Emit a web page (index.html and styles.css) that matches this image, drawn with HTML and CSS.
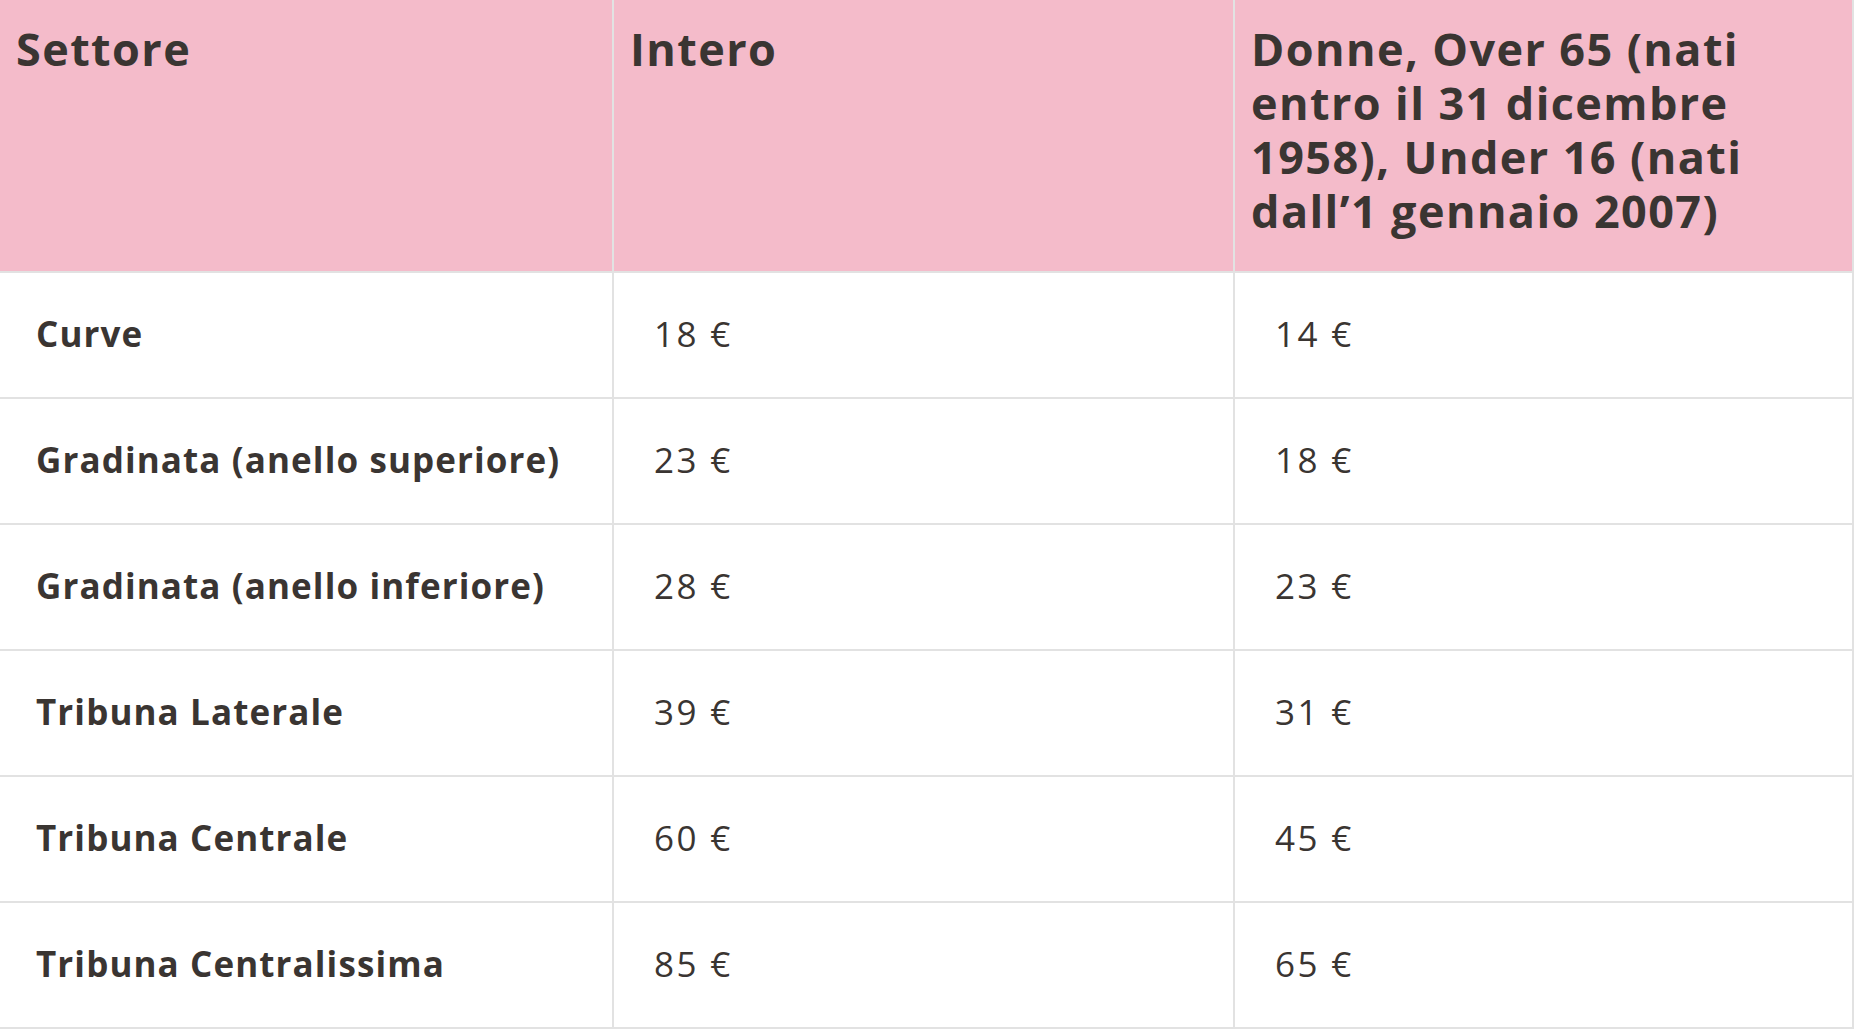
FILE: index.html
```html
<!DOCTYPE html>
<html lang="it">
<head>
<meta charset="utf-8">
<title>Prezzi biglietti</title>
<link rel="stylesheet" href="styles.css">
</head>
<body>
<table class="prices">
  <colgroup>
    <col class="c1">
    <col class="c2">
    <col class="c3">
  </colgroup>
  <thead>
    <tr>
      <th>Settore</th>
      <th>Intero</th>
      <th>Donne, Over 65 (nati entro il 31 dicembre 1958), Under 16 (nati dall’1 gennaio 2007)</th>
    </tr>
  </thead>
  <tbody>
    <tr><td class="name">Curve</td><td class="val">18 €</td><td class="val">14 €</td></tr>
    <tr><td class="name">Gradinata (anello superiore)</td><td class="val">23 €</td><td class="val">18 €</td></tr>
    <tr><td class="name">Gradinata (anello inferiore)</td><td class="val">28 €</td><td class="val">23 €</td></tr>
    <tr><td class="name">Tribuna Laterale</td><td class="val">39 €</td><td class="val">31 €</td></tr>
    <tr><td class="name">Tribuna Centrale</td><td class="val">60 €</td><td class="val">45 €</td></tr>
    <tr><td class="name">Tribuna Centralissima</td><td class="val">85 €</td><td class="val">65 €</td></tr>
  </tbody>
</table>
</body>
</html>
```
FILE: styles.css
```css
html, body {
  margin: 0;
  padding: 0;
  background: #ffffff;
}

body {
  font-family: "Open Sans", "Liberation Sans", sans-serif;
  color: #3a3532;
}

.prices {
  border-collapse: separate;
  border-spacing: 0;
  table-layout: fixed;
  width: 1854px;
}

.c1 { width: 614px; }
.c2 { width: 621px; }
.c3 { width: 619px; }

.prices th,
.prices td {
  border-right: 2px solid #e2e2e2;
  border-bottom: 2px solid #e2e2e2;
  text-align: left;
}

.prices th {
  background: #f4bbca;
  vertical-align: top;
  font-size: 45px;
  font-weight: 700;
  line-height: 54px;
  letter-spacing: 1.4px;
  padding: 22px 16px 33px 16px;
  height: 216px;
}

.prices td {
  height: 122px;
  padding: 0 36px 2px 36px;
  vertical-align: middle;
  font-size: 35px;
  line-height: 40px;
}

.prices td.name {
  font-weight: 700;
  letter-spacing: 1.1px;
}

.prices td.val {
  font-weight: 400;
  padding-left: 40px;
  letter-spacing: 2.4px;
}
```
